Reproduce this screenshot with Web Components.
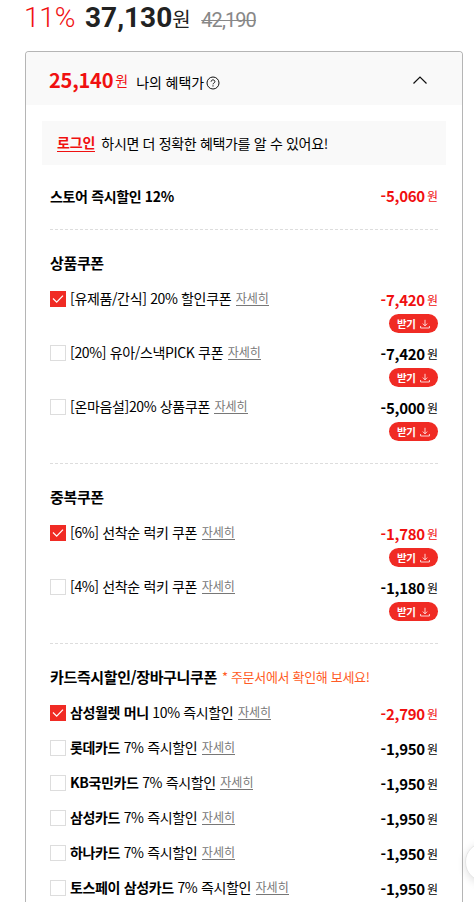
<!DOCTYPE html>
<html lang="ko">
<head>
<meta charset="utf-8">
<title>나의 혜택가</title>
<style>
  html, body {
    margin: 0;
    height: 902px;
    overflow: hidden;
    background: #fff;
  }

  body {
    --point: #f01010;
    --fill: #f02b24;
    color: #000;
    font-family: "Noto Sans CJK KR", sans-serif;
    font-size: 14px;
  }
</style>
</head>
<body>
<price-summary rate="11%" price="37,130" origin="42,190"></price-summary>

<benefit-panel total="25,140">
  <login-notice></login-notice>
  <benefit-section class="single">
    <discount-row plain on amount="-5,060"><b>스토어 즉시할인 12%</b></discount-row>
  </benefit-section>
  <benefit-section heading="상품쿠폰">
    <discount-row on coupon amount="-7,420">[유제품/간식] 20% 할인쿠폰</discount-row>
    <discount-row coupon amount="-7,420">[20%] 유아/스낵PICK 쿠폰</discount-row>
    <discount-row coupon amount="-5,000">[온마음설]20% 상품쿠폰</discount-row>
  </benefit-section>
  <benefit-section heading="중복쿠폰">
    <discount-row on coupon amount="-1,780">[6%] 선착순 럭키 쿠폰</discount-row>
    <discount-row coupon amount="-1,180">[4%] 선착순 럭키 쿠폰</discount-row>
  </benefit-section>
  <benefit-section class="last" heading="카드즉시할인/장바구니쿠폰" note="* 주문서에서 확인해 보세요!">
    <discount-row on amount="-2,790"><b>삼성월렛 머니</b> 10% 즉시할인</discount-row>
    <discount-row amount="-1,950"><b>롯데카드</b> 7% 즉시할인</discount-row>
    <discount-row amount="-1,950"><b>KB국민카드</b> 7% 즉시할인</discount-row>
    <discount-row amount="-1,950"><b>삼성카드</b> 7% 즉시할인</discount-row>
    <discount-row amount="-1,950"><b>하나카드</b> 7% 즉시할인</discount-row>
    <discount-row amount="-1,950"><b>토스페이 삼성카드</b> 7% 즉시할인</discount-row>
  </benefit-section>
</benefit-panel>

<floating-button></floating-button>

<script>
class PriceSummary extends HTMLElement {
  constructor() {
    super();
    this.attachShadow({ mode: "open" });
  }

  connectedCallback() {
    this.shadowRoot.innerHTML = `
      <style>
        :host {
          display: flex;
          align-items: baseline;
          height: 51px;
          padding-left: 24px;
          box-sizing: border-box;
          font-family: Roboto, "Noto Sans CJK KR", sans-serif;
          line-height: 35px;
          white-space: nowrap;
        }
        .rate { width: 61px; color: var(--point); font-size: 28px; font-weight: 350; letter-spacing: -0.2px; }
        .price { color: #222; font-size: 28px; font-weight: 700; }
        .won { width: 29px; color: #222; font-size: 20px; }
        .origin {
          color: #888;
          font-size: 20px;
          font-weight: 400;
          letter-spacing: -0.9px;
          text-decoration: line-through 1px;
        }
      </style>
      <span class="rate">${this.getAttribute("rate")}</span>
      <span class="price">${this.getAttribute("price")}</span>
      <span class="won">원</span>
      <span class="origin">${this.getAttribute("origin")}</span>
    `;
  }
}

class BenefitPanel extends HTMLElement {
  constructor() {
    super();
    this.attachShadow({ mode: "open" });
  }

  connectedCallback() {
    this.shadowRoot.innerHTML = `
      <style>
        :host {
          display: block;
          width: 438px;
          height: 851px;
          margin-left: 25px;
          box-sizing: border-box;
          border: 1px solid #b5b5b5;
          border-bottom: 0;
          border-radius: 4px 4px 0 0;
          overflow: hidden;
        }
        header {
          display: flex;
          align-items: center;
          height: 53px;
          padding: 0 34px 0 23px;
          box-sizing: border-box;
          background: #f9f9f9;
        }
        .title { display: flex; align-items: center; flex: 1; line-height: 30px; }
        .total { margin-top: 3px; color: var(--point); font-size: 20px; font-weight: 700; letter-spacing: -0.2px; }
        .won { margin: 2px 8px 0 2px; color: var(--point); font-size: 14px; }
        .name { margin-top: 6px; letter-spacing: -0.1px; }
        .help { margin: 8px 0 0 2px; }
        .arrow { margin-top: 3px; }
        svg { display: block; fill: none; }
      </style>
      <header>
        <div class="title">
          <span class="total">${this.getAttribute("total")}</span>
          <span class="won">원</span>
          <span class="name">나의 혜택가</span>
          <svg class="help" width="14" height="14" viewBox="0 0 14 14" stroke="#111">
            <circle cx="7" cy="7" r="6"/>
            <path d="M5.100 5.700c0-2.400 3.800-2.400 3.800 0 0 1.300-1.900 1.300-1.900 2.600M7 9.300v1.200"/>
          </svg>
        </div>
        <svg class="arrow" width="16" height="10" viewBox="0 0 16 10" stroke="#111" stroke-width="1.2">
          <path d="M1.500 8.500L8 2l6.500 6.500"/>
        </svg>
      </header>
      <slot></slot>
    `;
  }
}

class LoginNotice extends HTMLElement {
  constructor() {
    super();
    this.attachShadow({ mode: "open" });
  }

  connectedCallback() {
    this.shadowRoot.innerHTML = `
      <style>
        :host {
          display: flex;
          align-items: center;
          width: 404px;
          height: 44px;
          margin: 16px 0 0 16px;
          padding-left: 15px;
          box-sizing: border-box;
          background: #f9f9f9;
          white-space: nowrap;
        }
        a {
          margin-right: 6px;
          border-bottom: 1px solid var(--point);
          color: var(--point);
          font-weight: 700;
          line-height: 16px;
          padding-bottom: 1px;
          margin-top: -1px;
          letter-spacing: -0.1px;
        }
        span { letter-spacing: -0.33px; }
      </style>
      <a>로그인</a>
      <span>하시면 더 정확한 혜택가를 알 수 있어요!</span>
    `;
  }
}

class BenefitSection extends HTMLElement {
  constructor() {
    super();
    this.attachShadow({ mode: "open" });
  }

  connectedCallback() {
    const heading = this.getAttribute("heading");
    const note = this.getAttribute("note");

    this.shadowRoot.innerHTML = `
      <style>
        :host {
          display: block;
          margin: 0 24px;
          padding: 21px 0 11px;
          border-bottom: 1px dashed #ddd;
        }
        :host(.single) { height: 65px; box-sizing: border-box; padding-bottom: 0; }
        :host(.last) { padding-bottom: 0; border-bottom: 0; }
        .heading {
          display: flex;
          align-items: center;
          height: 24px;
          margin-bottom: 15px;
          white-space: nowrap;
        }
        h3 { margin: 0; font-size: 15px; font-weight: 700; line-height: 24px; letter-spacing: -0.35px; }
        .note { margin-left: 5px; color: #ff5c26; font-size: 13px; line-height: 24px; letter-spacing: -0.32px; }
      </style>
      ${
        heading
          ? `<div class="heading"><h3>${heading}</h3>${
              note ? `<span class="note">${note}</span>` : ""
            }</div>`
          : ""
      }
      <slot></slot>
    `;
  }
}

class DiscountRow extends HTMLElement {
  constructor() {
    super();
    this.attachShadow({ mode: "open" });
  }

  connectedCallback() {
    const plain = this.hasAttribute("plain");

    this.shadowRoot.innerHTML = `
      <style>
        :host {
          display: flex;
          justify-content: space-between;
          height: 35px;
          white-space: nowrap;
        }
        :host([coupon]) { height: 54px; }
        .label { display: flex; align-items: flex-start; height: 18px; line-height: 16px; }
        :host([plain]) .label { height: 20px; line-height: 20px; }
        .box {
          width: 16px;
          height: 16px;
          margin: 1px 4px 0 0;
          box-sizing: border-box;
          border: 1px solid #ddd;
        }
        :host([on]) .box { border: 0; background: var(--fill); }
        .text { letter-spacing: -0.35px; }
        ::slotted(b) { font-weight: 700; }
        .more {
          margin: 1px 0 0 4.500px;
          border-bottom: 1px solid #777;
          color: #777;
          font-size: 12px;
          line-height: 14px;
        }
        .side { display: flex; flex-direction: column; align-items: flex-end; }
        .amount { display: flex; height: 20px; line-height: 20px; font-size: 15px; letter-spacing: -0.25px; }
        .amount i { margin-left: 2px; font-size: 12px; font-style: normal; letter-spacing: 0; }
        :host([on]) .amount { color: var(--point); }
        .get {
          display: flex;
          align-items: center;
          gap: 4px;
          width: 49px;
          height: 19px;
          margin-top: 4px;
          padding: 0 0 0 8px;
          box-sizing: border-box;
          border: 0;
          border-radius: 10px;
          background: var(--fill);
          color: #fff;
          font: 700 10.500px/19px "Noto Sans CJK KR", sans-serif;
          letter-spacing: -0.4px;
        }
        svg { display: block; fill: none; stroke: #fff; }
      </style>
      <div class="label">
        ${plain ? "" : `<span class="box">${this.hasAttribute("on") ? this.renderCheck() : ""}</span>`}
        <span class="text"><slot></slot></span>
        ${plain ? "" : `<a class="more">자세히</a>`}
      </div>
      <div class="side">
        <span class="amount"><b>${this.getAttribute("amount")}</b><i>원</i></span>
        ${this.hasAttribute("coupon") ? this.renderButton() : ""}
      </div>
    `;
  }

  renderCheck() {
    return `<svg width="16" height="16" viewBox="0 0 16 16" stroke-width="1.2"><path d="M3 7.500l3.700 3.700L13 4.700"/></svg>`;
  }

  renderButton() {
    return `
      <button class="get">받기
        <svg width="10" height="10" viewBox="0 0 10 10" stroke-width=".8">
          <path d="M5 .8v6M2.800 4.600L5 6.800l2.200-2.200M.6 7v2h8.800V7"/>
        </svg>
      </button>`;
  }
}

class FloatingButton extends HTMLElement {
  constructor() {
    super();
    this.attachShadow({ mode: "open" });
  }

  connectedCallback() {
    this.shadowRoot.innerHTML = `
      <style>
        :host {
          position: fixed;
          top: 842px;
          left: 465px;
          width: 40px;
          height: 40px;
          box-sizing: border-box;
          border: 1px solid #e5e5e5;
          border-radius: 50%;
          background: #fff;
          box-shadow: 0 2px 8px rgba(0, 0, 0, .12);
        }
      </style>
    `;
  }
}

customElements.define("price-summary", PriceSummary);
customElements.define("benefit-panel", BenefitPanel);
customElements.define("login-notice", LoginNotice);
customElements.define("benefit-section", BenefitSection);
customElements.define("discount-row", DiscountRow);
customElements.define("floating-button", FloatingButton);
</script>
</body>
</html>
